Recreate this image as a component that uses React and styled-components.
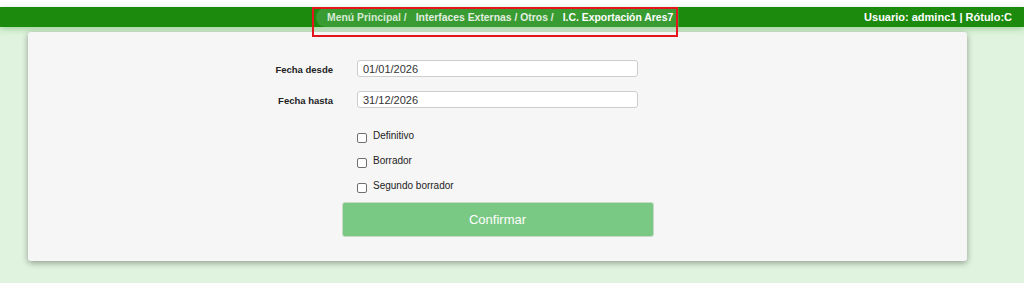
import React from 'react'
import styled, { createGlobalStyle } from 'styled-components'

const GlobalStyle = createGlobalStyle`
  html, body {
    margin: 0;
    padding: 0;
    background: #dff3de;
    font-family: "Liberation Sans", Arial, sans-serif;
  }
`

export default function App() {
  return (
    <Page>
      <GlobalStyle />
      <Header>
        <Breadcrumb>
          <Crumb>Menú Principal /</Crumb>
          <Crumb $muted>Interfaces Externas / Otros /</Crumb>
          <Crumb $current>I.C. Exportación Ares7</Crumb>
        </Breadcrumb>
        <UserInfo>Usuario: adminc1 | Rótulo:C</UserInfo>
      </Header>
      <Highlight />

      <Card>
        <Form onSubmit={(e) => e.preventDefault()}>
          <FieldRow>
            <Label>Fecha desde</Label>
            <TextInput defaultValue="01/01/2026" />
          </FieldRow>
          <FieldRow>
            <Label>Fecha hasta</Label>
            <TextInput defaultValue="31/12/2026" />
          </FieldRow>

          <Options>
            <Option>
              <Check type="checkbox" />
              Definitivo
            </Option>
            <Option>
              <Check type="checkbox" />
              Borrador
            </Option>
            <Option>
              <Check type="checkbox" />
              Segundo borrador
            </Option>
          </Options>
        </Form>
        <ConfirmButton type="button">Confirmar</ConfirmButton>
      </Card>
    </Page>
  )
}

const Page = styled.div`
  position: relative;
  min-height: 100vh;
  border-top: 7px solid #ffffff;
  box-sizing: border-box;
  background: #dff3de;
`

const Header = styled.header`
  display: flex;
  align-items: center;
  height: 20px;
  padding: 0 12px 0 316px;
  background: #1b8a0d;
  box-shadow: 0 2px 6px rgba(40, 150, 30, 0.35);
  font-size: 10.4px;
  font-weight: bold;
  color: #ffffff;
`

const Breadcrumb = styled.nav`
  display: flex;
  align-items: center;
  gap: 9px;
  height: 19px;
  padding: 0 6px 0 11px;
  background: #399c33;
  border-radius: 10px 0 0 10px;
`

const Crumb = styled.span`
  color: ${(p) => (p.$current ? '#ffffff' : p.$muted ? '#e2eee0' : '#d6ead3')};
  font-weight: bold;
  white-space: nowrap;
`

const UserInfo = styled.div`
  margin-left: auto;
  font-size: 11px;
  white-space: nowrap;
`

const Highlight = styled.div`
  position: absolute;
  left: 312px;
  top: 0;
  width: 366px;
  height: 30px;
  border: 2px solid #e3151d;
  box-sizing: border-box;
  pointer-events: none;
`

const Card = styled.section`
  margin: 5px 57px 0 28px;
  padding: 28px 0 24px;
  background: #f6f6f6;
  border-radius: 3px;
  box-shadow: 0 2px 6px rgba(0, 0, 0, 0.35);
  display: flex;
  flex-direction: column;
`

const Form = styled.form`
  display: flex;
  flex-direction: column;
  gap: 14px;
  padding-left: 205px;
`

const FieldRow = styled.div`
  display: flex;
  align-items: center;
  gap: 24px;
`

const Label = styled.label`
  width: 100px;
  text-align: right;
  font-size: 9.5px;
  font-weight: bold;
  color: #222222;
  padding-top: 2px;
`

const TextInput = styled.input`
  width: 281px;
  height: 17px;
  box-sizing: border-box;
  padding: 0 5px;
  border: 1px solid #cdcdcd;
  border-radius: 3px;
  background: #ffffff;
  font-family: "Liberation Sans", Arial, sans-serif;
  font-size: 11px;
  color: #333333;
  outline: none;
`

const Options = styled.div`
  display: flex;
  flex-direction: column;
  margin: 1px 0 0 124px;
`

const Option = styled.label`
  display: flex;
  align-items: center;
  gap: 6px;
  height: 25px;
  font-size: 10px;
  color: #222222;
`

const Check = styled.input`
  appearance: none;
  margin: 5px 0 0;
  width: 10px;
  height: 10px;
  border: 1px solid #6f6f6f;
  border-radius: 2px;
  background: #ffffff;
`

const ConfirmButton = styled.button`
  align-self: center;
  margin-top: 4px;
  width: 312px;
  height: 35px;
  border: 1px solid #c9d9c9;
  border-radius: 3px;
  background: #79c883;
  color: #ffffff;
  font-family: "Liberation Sans", Arial, sans-serif;
  font-size: 13px;
  cursor: pointer;
`
